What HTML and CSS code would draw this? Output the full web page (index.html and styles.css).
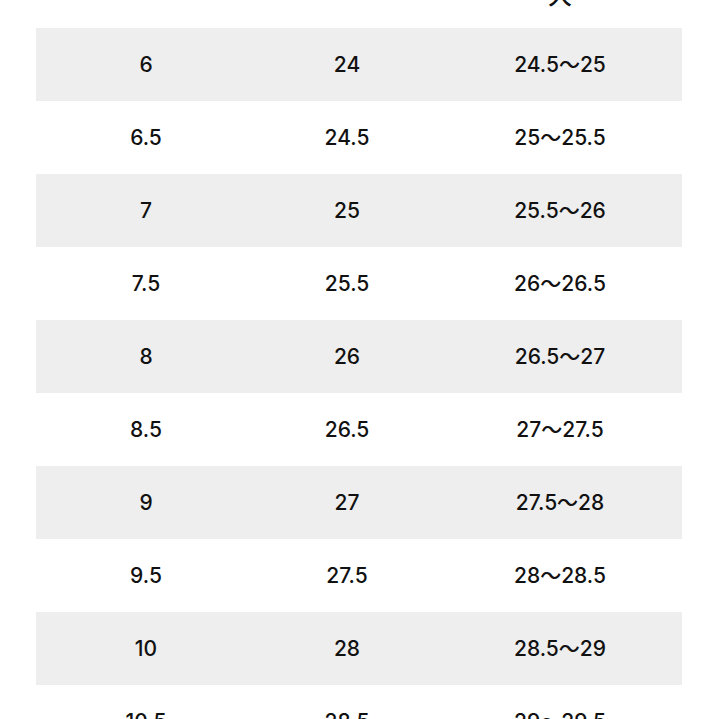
FILE: index.html
```html
<!DOCTYPE html>
<html lang="ja">
<head>
<meta charset="utf-8">
<link rel="stylesheet" href="styles.css">
</head>
<body>
<div class="sheet">
  <table class="size-table">
    <tr class="head"><td></td><td></td><td>大</td></tr>
    <tr class="alt"><td>6</td><td>24</td><td>24.5～25</td></tr>
    <tr><td>6.5</td><td>24.5</td><td>25～25.5</td></tr>
    <tr class="alt"><td>7</td><td>25</td><td>25.5～26</td></tr>
    <tr><td>7.5</td><td>25.5</td><td>26～26.5</td></tr>
    <tr class="alt"><td>8</td><td>26</td><td>26.5～27</td></tr>
    <tr><td>8.5</td><td>26.5</td><td>27～27.5</td></tr>
    <tr class="alt"><td>9</td><td>27</td><td>27.5～28</td></tr>
    <tr><td>9.5</td><td>27.5</td><td>28～28.5</td></tr>
    <tr class="alt"><td>10</td><td>28</td><td>28.5～29</td></tr>
    <tr><td>10.5</td><td>28.5</td><td>29～29.5</td></tr>
  </table>
</div>
</body>
</html>
```
FILE: styles.css
```css
html, body {
  margin: 0;
  padding: 0;
  background: #ffffff;
  overflow: hidden;
}
.sheet {
  width: 719px;
  height: 719px;
  overflow: hidden;
}
.size-table {
  margin: -45px 0 0 36px;
  width: 646px;
  border-collapse: collapse;
  table-layout: fixed;
  font-family: Inter, "Noto Sans CJK JP", sans-serif;
  font-size: 21px;
  font-weight: 500;
  line-height: 24px;
  color: #111111;
}
.size-table td {
  height: 73px;
  padding: 0;
  text-align: center;
  vertical-align: middle;
  box-sizing: border-box;
}
.size-table td:nth-child(1) { width: 220px; }
.size-table td:nth-child(2) { width: 182px; }
.size-table td:nth-child(3) { width: 244px; }
.size-table tr.alt td {
  background: #eeeeee;
}
.size-table tr.head td {
  height: 73px;
  vertical-align: bottom;
  padding-bottom: 20px;
  font-size: 24px;
  line-height: 1;
}
```
